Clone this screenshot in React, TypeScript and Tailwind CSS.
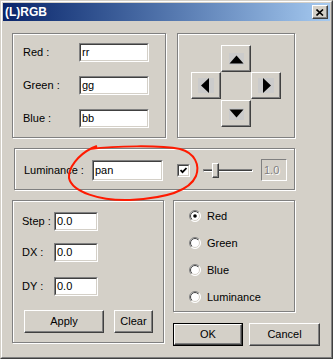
import React from 'react';

const font = { fontFamily: '"Liberation Sans", Arial, sans-serif' };

const groupCls =
  'border border-[#808080] shadow-[inset_1px_1px_0_#fff,1px_1px_0_#fff]';

const Edit: React.FC<{ value: string; w: number; h: number }> = ({ value, w, h }) => (
  <div
    className="border border-t-[#808080] border-l-[#808080] border-r-white border-b-white"
    style={{ width: w, height: h }}
  >
    <div className="h-full border border-t-[#404040] border-l-[#404040] border-r-[#d4d0c8] border-b-[#d4d0c8] bg-white pl-[1px] flex items-center text-[11px] text-black leading-none">
      {value}
    </div>
  </div>
);

const Raised: React.FC<{ className?: string; children?: React.ReactNode }> = ({ className, children }) => (
  <div
    className={
      'border border-t-white border-l-white border-r-[#404040] border-b-[#404040] shadow-[inset_-1px_-1px_0_#808080] flex items-center justify-center ' +
      (className || '')
    }
  >
    {children}
  </div>
);

const Radio: React.FC<{ label: string; checked?: boolean }> = ({ label, checked }) => (
  <div className="flex items-center h-[12px]">
    <svg width="12" height="12" viewBox="0 0 12 12">
      <defs>
        <linearGradient id="ro" x1="0" y1="0" x2="1" y2="1">
          <stop offset="0.5" stopColor="#808080" />
          <stop offset="0.5" stopColor="#ffffff" />
        </linearGradient>
        <linearGradient id="ri" x1="0" y1="0" x2="1" y2="1">
          <stop offset="0.5" stopColor="#404040" />
          <stop offset="0.5" stopColor="#d4d0c8" />
        </linearGradient>
      </defs>
      <circle cx="6" cy="6" r="5.5" fill="#fff" stroke="url(#ro)" strokeWidth="1" />
      <circle cx="6" cy="6" r="4.5" fill="#fff" stroke="url(#ri)" strokeWidth="1" />
      {checked && <circle cx="6" cy="6" r="1.8" fill="#000" />}
    </svg>
    <span className="ml-[6px] text-[11px] text-black">{label}</span>
  </div>
);

const App: React.FC = () => {
  return (
    <div className="bg-white w-[333px] h-[360px]" style={font}>
      <div className="relative w-[333px] h-[359px] bg-[#d4d0c8] border border-t-[#d4d0c8] border-l-[#d4d0c8] border-r-[#404040] border-b-[#404040]">
        <div className="h-full border border-t-white border-l-white border-r-[#808080] border-b-[#808080] p-[1px]">
          {/* title bar */}
          <div className="h-[18px] flex items-center justify-between pl-[2px] pr-[2px] bg-gradient-to-r from-[#0a246a] to-[#a6caf0]">
            <span className="text-white font-bold text-[12px]">(L)RGB</span>
            <div className="w-[16px] h-[14px] bg-[#d4d0c8] border border-t-white border-l-white border-r-[#404040] border-b-[#404040] shadow-[inset_-1px_-1px_0_#808080] flex items-center justify-center">
              <svg width="8" height="7" viewBox="0 0 8 7">
                <path d="M0.5 0.5 L7 6.5 M7 0.5 L0.5 6.5" stroke="#000" strokeWidth="1.6" />
              </svg>
            </div>
          </div>

          {/* body */}
          <div className="pl-[9px] pt-[12px]">
            <div className="flex gap-[11px]">
              <div className={groupCls + ' w-[154px] h-[105px] pl-[10px] pt-[9px] flex flex-col gap-[14px]'}>
                {[['Red :', 'rr'], ['Green :', 'gg'], ['Blue :', 'bb']].map(([l, v]) => (
                  <div key={l} className="flex items-center h-[19px]">
                    <span className="w-[56px] text-[11px] text-black">{l}</span>
                    <Edit value={v} w={70} h={19} />
                  </div>
                ))}
              </div>
              <div className={groupCls + ' w-[118px] h-[105px] pl-[13px] pt-[11px]'}>
                <div className="grid grid-cols-[30px_30px_30px] grid-rows-[27px_28px_27px]">
                  <div />
                  <Raised className="w-[30px] h-[27px]">
                    <div className="w-[15px] h-[12px] bg-[#cbcbcb]">
                      <svg width="15" height="12" viewBox="0 0 15 12">
                        <polygon points="0.5,10.5 7.5,2.5 14.5,10.5" fill="#000" />
                      </svg>
                    </div>
                  </Raised>
                  <div />
                  <Raised className="w-[30px] h-[27px]">
                    <div className="w-[16px] h-[15px] bg-[#cbcbcb]">
                      <svg width="16" height="15" viewBox="0 0 16 15">
                        <polygon points="3,7.5 11,0 11,15" fill="#000" />
                      </svg>
                    </div>
                  </Raised>
                  <div />
                  <Raised className="w-[30px] h-[27px]">
                    <div className="w-[16px] h-[15px] bg-[#cbcbcb]">
                      <svg width="16" height="15" viewBox="0 0 16 15">
                        <polygon points="5,0 5,15 13,7.5" fill="#000" />
                      </svg>
                    </div>
                  </Raised>
                  <div />
                  <Raised className="w-[30px] h-[27px]">
                    <div className="w-[15px] h-[12px] bg-[#cbcbcb]">
                      <svg width="15" height="12" viewBox="0 0 15 12">
                        <polygon points="0.5,1.5 7.5,9.5 14.5,1.5" fill="#000" />
                      </svg>
                    </div>
                  </Raised>
                  <div />
                </div>
              </div>
            </div>

            {/* luminance */}
            <div className={groupCls + ' mt-[10px] ml-[2px] w-[281px] h-[42px] pl-[9px] pt-[2px] flex items-center'}>
              <span className="w-[68px] text-[11px] text-black">Luminance :</span>
              <Edit value="pan" w={71} h={21} />
              <div className="ml-[14px] w-[13px] h-[13px] border border-t-[#808080] border-l-[#808080] border-r-white border-b-white">
                <div className="h-full bg-white border border-t-[#404040] border-l-[#404040] border-r-[#d4d0c8] border-b-[#d4d0c8] flex items-center justify-center">
                  <svg width="7" height="7" viewBox="0 0 7 7">
                    <path d="M0.5 3 L2.5 5.2 L6.5 1" stroke="#000" strokeWidth="1.8" fill="none" />
                  </svg>
                </div>
              </div>
              <div className="relative ml-[13px] w-[50px] h-[15px] flex items-center">
                <div className="w-full h-[3px] border border-t-[#808080] border-l-[#808080] border-r-white border-b-white bg-[#404040]" />
                <div className="absolute left-[9px] top-0 w-[7px] h-[15px] bg-[#d4d0c8] border border-t-white border-l-white border-r-[#404040] border-b-[#404040] shadow-[inset_-1px_-1px_0_#808080]" />
              </div>
              <div className="ml-[8px] w-[26px] h-[22px] border border-t-[#808080] border-l-[#808080] border-r-white border-b-white pl-[2px] flex items-center text-[11px] text-[#808080] [text-shadow:1px_1px_0_#fff]">
                1.0
              </div>
            </div>

            {/* bottom */}
            <div className="mt-[10px] flex gap-[9px]">
              <div className={groupCls + ' w-[152px] h-[143px] pl-[9px] pt-[11px]'}>
                <div className="flex items-center h-[19px]">
                  <span className="w-[32px] text-[11px] text-black">Step :</span>
                  <Edit value="0.0" w={44} h={19} />
                </div>
                <div className="flex items-center h-[19px] mt-[12px]">
                  <span className="w-[32px] text-[11px] text-black">DX :</span>
                  <Edit value="0.0" w={44} h={19} />
                </div>
                <div className="flex items-center h-[19px] mt-[15px]">
                  <span className="w-[32px] text-[11px] text-black">DY :</span>
                  <Edit value="0.0" w={44} h={19} />
                </div>
                <div className="flex gap-[10px] mt-[14px] ml-[2px]">
                  <Raised className="w-[80px] h-[23px] text-[11px] text-black">Apply</Raised>
                  <Raised className="w-[39px] h-[23px] text-[11px] text-black">Clear</Raised>
                </div>
              </div>
              <div>
                <div className={groupCls + ' w-[122px] h-[112px] pl-[15px] pt-[9px] flex flex-col gap-[15px]'}>
                  <Radio label="Red" checked />
                  <Radio label="Green" />
                  <Radio label="Blue" />
                  <Radio label="Luminance" />
                </div>
                <div className="mt-[11px] flex gap-[6px]">
                  <div className="w-[70px] h-[23px] border border-black">
                    <Raised className="w-full h-full text-[11px] text-black">OK</Raised>
                  </div>
                  <Raised className="w-[71px] h-[23px] text-[11px] text-black">Cancel</Raised>
                </div>
              </div>
            </div>
          </div>
        </div>

        {/* hand-drawn red annotation */}
        <svg
          className="absolute pointer-events-none"
          style={{ left: 59, top: 139 }}
          width="146"
          height="66"
          viewBox="0 0 146 66"
        >
          <path
            d="M30 9 C55 6 100 5 120 9 C135 13 140 25 136 36 C130 50 110 58 70 60 C40 61 12 52 9 38 C8 28 18 15 32 8 L37 6"
            fill="none"
            stroke="#ff1a00"
            strokeWidth="2"
          />
        </svg>
      </div>
    </div>
  );
};

export default App;
